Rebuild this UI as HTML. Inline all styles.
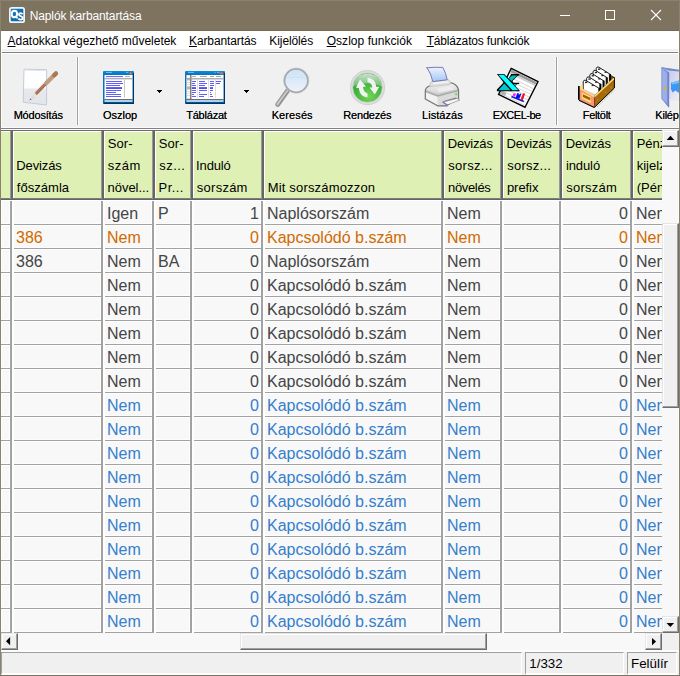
<!DOCTYPE html><html><head><meta charset="utf-8"><title>Naplók karbantartása</title><style>
*{box-sizing:border-box;margin:0;padding:0}
html,body{width:680px;height:676px;overflow:hidden;background:#f0f0f0;font-family:"Liberation Sans",sans-serif;}
#w{position:absolute;left:0;top:0;width:680px;height:676px;overflow:hidden;background:#f0f0f0}
.a{position:absolute}
#title{left:0;top:0;width:680px;height:31px;background:#7e735f}
#ttext{top:9px;color:#fff;font-size:12px;line-height:15px;white-space:nowrap}
#menu{left:1px;top:31px;width:678px;height:18px;background:#fff}
.mi{top:34px;font-size:12px;line-height:15px;color:#000;white-space:nowrap}
.mi u{text-decoration:underline;text-decoration-thickness:1px;text-underline-offset:1px}
.tl{top:109px;font-size:11px;line-height:13px;color:#000;white-space:nowrap;text-align:center;text-shadow:0 0 0.6px rgba(0,0,0,.75)}
.hc{background:#dff0b5;top:131px;height:67px}
.ht{font-size:13px;line-height:22px;color:#000;white-space:nowrap}
.bt{font-size:16px;line-height:24px;white-space:nowrap;height:24px}
.c0{color:#454545}.c1{color:#d06a00}.c2{color:#357ecb}
</style></head><body><div id="w">
<div id="title" class="a"></div>
<svg class="a" style="left:8px;top:6px" width="18" height="18" viewBox="8 6 18 18"><defs><linearGradient id="gqs" x1="0" y1="0" x2="1" y2="1"><stop offset="0" stop-color="#1a84cc"/><stop offset="1" stop-color="#065c9e"/></linearGradient></defs><rect x="9" y="7" width="16" height="16" rx="2.6" fill="#f1f3f6"/><rect x="10.7" y="8.7" width="12.6" height="12.6" rx="1" fill="url(#gqs)"/><ellipse cx="14.4" cy="14" rx="2.7" ry="3.3" fill="none" stroke="#fff" stroke-width="1.9"/><path d="M15.2 16.2L17.6 18.4" stroke="#fff" stroke-width="1.7"/><path d="M22.6 14.2C21.6 12.6 18.8 12.8 18.9 14.6C19 16.4 22.7 15.9 22.8 18C22.9 20 19.4 20.1 18.4 18.5" fill="none" stroke="#fff" stroke-width="1.8"/></svg>
<div id="ttext" class="a" style="left:29.66px;letter-spacing:-0.109px">Naplók karbantartása</div>
<svg class="a" style="left:555px;top:5px" width="115" height="22" viewBox="0 0 115 22" shape-rendering="crispEdges"><rect x="5" y="10" width="10" height="1" fill="#fff"/><rect x="50.5" y="5.5" width="9" height="9" fill="none" stroke="#fff" stroke-width="1"/><g shape-rendering="geometricPrecision" stroke="#fff" stroke-width="1.1"><line x1="96" y1="5" x2="106" y2="15"/><line x1="106" y1="5" x2="96" y2="15"/></g></svg>
<div id="menu" class="a"></div>
<div class="a mi" style="left:7.56px;letter-spacing:-0.023px"><u>A</u>datokkal végezhető műveletek</div>
<div class="a mi" style="left:188.98px;letter-spacing:-0.113px"><u>K</u>arbantartás</div>
<div class="a mi" style="left:269.36px;letter-spacing:-0.109px">Ki<u>j</u>elölés</div>
<div class="a mi" style="left:326.66px;letter-spacing:0.047px"><u>O</u>szlop funkciók</div>
<div class="a mi" style="left:426.63px;letter-spacing:-0.172px"><u>T</u>áblázatos funkciók</div>
<div class="a" style="left:1px;top:51px;width:678px;height:1px;background:#f8f8f8"></div>
<div class="a" style="left:1px;top:52px;width:678px;height:1px;background:#828282"></div>
<div class="a" style="left:1px;top:53px;width:678px;height:1px;background:#fff"></div>
<div class="a" style="left:1px;top:49px;width:1px;height:79px;background:#fcfcfc"></div>
<div class="a" style="left:678px;top:49px;width:1px;height:79px;background:#f8f8f9"></div>
<div class="a" style="left:76px;top:57px;width:1px;height:68px;background:#f7f7f7"></div>
<div class="a" style="left:77px;top:57px;width:1px;height:68px;background:#a0a0a0"></div>
<div class="a" style="left:78px;top:57px;width:1px;height:68px;background:#fff"></div>
<div class="a" style="left:555px;top:57px;width:1px;height:68px;background:#f7f7f7"></div>
<div class="a" style="left:556px;top:57px;width:1px;height:68px;background:#a0a0a0"></div>
<div class="a" style="left:557px;top:57px;width:1px;height:68px;background:#fff"></div>
<div class="a tl" style="left:-1.84px;width:80px;letter-spacing:-0.185px">Módosítás</div>
<div class="a tl" style="left:80.06px;width:80px;letter-spacing:0.004px">Oszlop</div>
<div class="a tl" style="left:166.43px;width:80px;letter-spacing:-0.200px">Táblázat</div>
<div class="a tl" style="left:252.20px;width:80px;letter-spacing:0.099px">Keresés</div>
<div class="a tl" style="left:327.35px;width:80px;letter-spacing:-0.194px">Rendezés</div>
<div class="a tl" style="left:402.45px;width:80px;letter-spacing:0.052px">Listázás</div>
<div class="a tl" style="left:476.68px;width:80px;letter-spacing:-0.490px">EXCEL-be</div>
<div class="a tl" style="left:556.64px;width:80px;letter-spacing:-0.315px">Feltölt</div>
<div class="a tl" style="left:632.60px;width:80px;letter-spacing:-0.200px">Kilépés</div>
<div class="a" style="left:157px;top:90px;width:5px;height:1px;background:#000"></div><div class="a" style="left:158px;top:91px;width:3px;height:1px;background:#000"></div><div class="a" style="left:159px;top:92px;width:1px;height:1px;background:#000"></div>
<div class="a" style="left:244px;top:90px;width:5px;height:1px;background:#000"></div><div class="a" style="left:245px;top:91px;width:3px;height:1px;background:#000"></div><div class="a" style="left:246px;top:92px;width:1px;height:1px;background:#000"></div>
<svg class="a" style="left:0;top:54px" width="679" height="73" viewBox="0 54 679 73">
<defs>
<linearGradient id="gpaper" x1="0" y1="0" x2="0" y2="1"><stop offset="0" stop-color="#ffffff"/><stop offset="0.52" stop-color="#fdfdfe"/><stop offset="0.56" stop-color="#e6e8ec"/><stop offset="1" stop-color="#e2e5ea"/></linearGradient>
<linearGradient id="gpen" x1="0" y1="0" x2="1" y2="1"><stop offset="0" stop-color="#c89878"/><stop offset="0.5" stop-color="#b07a58"/><stop offset="1" stop-color="#8c5a3c"/></linearGradient>
<linearGradient id="gwin" x1="0" y1="0" x2="0" y2="1"><stop offset="0" stop-color="#0f8ad8"/><stop offset="0.12" stop-color="#0672c0"/><stop offset="0.9" stop-color="#0a70b8"/><stop offset="1" stop-color="#00406e"/></linearGradient>
<linearGradient id="glens" x1="0" y1="0" x2="0" y2="1"><stop offset="0" stop-color="#cfe2f6"/><stop offset="0.4" stop-color="#d8e8f8"/><stop offset="1" stop-color="#f0f2fa"/></linearGradient>
<radialGradient id="ggreen" cx="0.55" cy="0.8" r="0.85"><stop offset="0" stop-color="#74d454"/><stop offset="0.55" stop-color="#3eb43e"/><stop offset="1" stop-color="#349c3c"/></radialGradient>
<linearGradient id="ggloss" x1="0" y1="0" x2="0" y2="1"><stop offset="0" stop-color="#f4f4f4" stop-opacity="0.78"/><stop offset="1" stop-color="#e8e8e8" stop-opacity="0.3"/></linearGradient>
<linearGradient id="gppaper" x1="0" y1="0" x2="0" y2="1"><stop offset="0" stop-color="#eef3ff"/><stop offset="1" stop-color="#a4c4f6"/></linearGradient>
<linearGradient id="gprn" x1="0" y1="0" x2="0" y2="1"><stop offset="0" stop-color="#f2f2f2"/><stop offset="0.5" stop-color="#d4d4d4"/><stop offset="1" stop-color="#bcbcbc"/></linearGradient>
<linearGradient id="gprn2" x1="0" y1="0" x2="0" y2="1"><stop offset="0" stop-color="#f4f4f4"/><stop offset="1" stop-color="#dcdcdc"/></linearGradient>
<linearGradient id="gdoor" x1="0" y1="0" x2="1" y2="0"><stop offset="0" stop-color="#9fb0ea"/><stop offset="0.7" stop-color="#7f98dc"/><stop offset="1" stop-color="#6078c0"/></linearGradient>
<linearGradient id="gdoorin" x1="0" y1="0" x2="1" y2="1"><stop offset="0" stop-color="#b8bce8"/><stop offset="1" stop-color="#f0f0f8"/></linearGradient>
</defs>

<!-- 1 Modositas: paper + pen -->
<g>
<path d="M24 69.2 L46.6 69.7 L46.6 105 L23.2 102.2 Z" fill="url(#gpaper)" stroke="#c4ccd6" stroke-width="1"/>
<path d="M25 70.2 L45.6 70.6" stroke="#dfe4ea" stroke-width="1"/>
<path d="M29.3 100.5 L32.2 96 L34.2 97.8 Z" fill="#d8d8d8"/>
<path d="M29.3 100.5 L30.6 98.4 L31.6 99.3 Z" fill="#505458"/>
<path d="M32 96.2 L35 92.8 L37.2 94.8 L34.2 98 Z" fill="#eadfd4"/>
<path d="M35.8 93.8 L47 82.4" stroke="#b07a58" stroke-width="3.3" stroke-linecap="butt"/>
<path d="M36.4 94.6 L47.6 83.2" stroke="#8e5e42" stroke-width="0.9" opacity="0.7"/>
<path d="M46.4 83 L55.6 73.8" stroke="#c09c84" stroke-width="4.3" stroke-linecap="round"/>
<path d="M54.2 75.2 L56 73.4" stroke="#a87858" stroke-width="4.3" stroke-linecap="round"/>
</g>

<!-- 2 Oszlop window -->
<g>
<rect x="103" y="71" width="31" height="33" rx="1" fill="url(#gwin)"/>
<rect x="133" y="73" width="1" height="31" fill="#00365e"/>
<rect x="104" y="103" width="30" height="1" fill="#00365e"/>
<rect x="104.5" y="75" width="28" height="24.6" fill="#ffffff"/>
<rect x="106" y="71.9" width="6" height="0.9" fill="#7cc4f4"/>
<rect x="126" y="71.9" width="2.4" height="0.9" fill="#7cc4f4"/>
<path d="M129 74.3 L130.7 71.6 L132.4 74.3 Z" fill="#f8743c"/>
<rect x="106" y="76" width="17" height="1.1" fill="#6c6cf6"/>
<rect x="125" y="76" width="5" height="1.1" fill="#b4b4b4"/>
<rect x="104.5" y="78.2" width="28" height="1.1" fill="#9c9c9c"/>
<rect x="124.1" y="80" width="0.9" height="17.6" fill="#c4c4c4"/>
<g fill="#6060f8">
<rect x="106" y="81" width="16" height="1"/>
<rect x="106" y="83" width="17" height="1"/>
<rect x="106" y="85" width="14" height="1"/>
<rect x="106" y="87.1" width="16" height="1.9" fill="#5050f8"/>
<rect x="106" y="90" width="15" height="1"/>
<rect x="106" y="92" width="10" height="1"/>
<rect x="106" y="94" width="15" height="1"/>
<rect x="106" y="96" width="15" height="1"/>
</g>
<rect x="104.5" y="99" width="28" height="1" fill="#6c6c6c"/>
<rect x="104.5" y="100.2" width="28" height="1.6" fill="#d6ecff"/>
</g>

<!-- 3 Tablazat window -->
<g>
<rect x="185" y="71" width="40" height="33" rx="1" fill="url(#gwin)"/>
<rect x="224" y="73" width="1" height="31" fill="#00365e"/>
<rect x="186" y="103" width="39" height="1" fill="#00365e"/>
<rect x="186.5" y="75" width="37" height="24.6" fill="#ffffff"/>
<rect x="188" y="71.9" width="6" height="0.9" fill="#7cc4f4"/>
<rect x="214.6" y="71.9" width="1" height="0.9" fill="#7cc4f4"/>
<rect x="217" y="71.9" width="2.6" height="0.9" fill="#7cc4f4"/>
<path d="M219.6 74.3 L221.5 71.6 L223.4 74.3 Z" fill="#f8743c"/>
<!-- row header -->
<rect x="186.5" y="75" width="4" height="24" fill="#c4c4c4"/>
<g fill="#ffffff"><rect x="187" y="75.4" width="3" height="2.4"/><rect x="187" y="80.6" width="3" height="1.4"/><rect x="187" y="82.8" width="3" height="1.4"/><rect x="187" y="84.8" width="3" height="1.4"/><rect x="187" y="89.6" width="3" height="1.4"/><rect x="187" y="91.6" width="3" height="1.4"/><rect x="187" y="93.6" width="3" height="1.4"/><rect x="187" y="95.6" width="3" height="2.8"/></g>
<rect x="186.5" y="87" width="4" height="2" fill="#b8b8b8"/>
<rect x="190.3" y="75" width="1.1" height="24" fill="#5c5c5c"/>
<g fill="#a8a8a8"><rect x="192" y="76" width="4" height="1"/><rect x="200" y="76" width="7" height="1"/><rect x="210" y="76" width="4" height="1"/><rect x="216" y="76" width="5" height="1"/></g>
<rect x="186.5" y="78.2" width="37" height="1.2" fill="#9c9c9c"/>
<g fill="#d6d6d6"><rect x="197.2" y="80" width="0.8" height="18"/><rect x="208.3" y="80" width="0.8" height="18"/><rect x="215" y="80" width="0.8" height="18"/></g>
<g fill="#6060f8">
<rect x="192" y="81" width="4" height="1"/><rect x="199" y="81" width="6" height="1"/><rect x="210" y="81" width="4" height="1"/><rect x="216" y="81" width="5" height="1"/>
<rect x="192" y="83" width="3" height="1"/><rect x="199" y="83" width="8" height="1"/><rect x="210" y="83" width="4" height="1"/><rect x="216" y="83" width="4" height="1"/>
<rect x="192" y="85" width="4" height="1"/><rect x="199" y="85" width="6" height="1"/><rect x="210" y="85" width="4" height="1"/>
<rect x="192" y="87.1" width="4" height="1.9" fill="#5050f8"/><rect x="199" y="87.1" width="8" height="1.9" fill="#5050f8"/><rect x="210" y="87.1" width="3" height="1.9" fill="#5050f8"/>
<rect x="192" y="90" width="4" height="1"/><rect x="199" y="90" width="8" height="1"/><rect x="210" y="90" width="3" height="1"/>
<rect x="192" y="92" width="4" height="1"/><rect x="199" y="92" width="1" height="1"/><rect x="210" y="92" width="1" height="1"/>
<rect x="192" y="94" width="2" height="1"/><rect x="199" y="94" width="8" height="1"/><rect x="210" y="94" width="2" height="1"/>
<rect x="192" y="96" width="4" height="1"/><rect x="199" y="96" width="5" height="1"/><rect x="210" y="96" width="3" height="1"/>
</g>
<rect x="186.5" y="99" width="37" height="1" fill="#6c6c6c"/>
<rect x="186.5" y="100.2" width="37" height="1.6" fill="#d6ecff"/>
<rect x="188" y="100.6" width="3" height="0.8" fill="#a8c4dc"/><rect x="219" y="100.6" width="3" height="0.8" fill="#a8c4dc"/>
</g>

<!-- 4 Kereses magnifier -->
<g>
<path d="M287.6 90.6 L277.8 104.4" stroke="#9a9a9c" stroke-width="5" stroke-linecap="round"/>
<path d="M287.4 91 L277.6 104.2" stroke="#cacacc" stroke-width="2" stroke-linecap="round"/>
<path d="M288.6 91.2 L279.4 104.4" stroke="#848486" stroke-width="0.9" stroke-linecap="round" opacity="0.8"/>
<circle cx="296.2" cy="80.6" r="11.7" fill="url(#glens)" stroke="#a4a8ac" stroke-width="1.8"/>
<circle cx="296.2" cy="80.6" r="12.8" fill="none" stroke="#c4c8cc" stroke-width="0.7" opacity="0.7"/>
<path d="M287.4 77.8 Q296 76.6 305 78" stroke="#c4dcf4" stroke-width="0.8" fill="none" opacity="0.8"/>
</g>

<!-- 5 Rendezes -->
<g>
<circle cx="367.5" cy="87.6" r="17" fill="#dedede" stroke="#d2d2d2" stroke-width="1.2"/>
<circle cx="367.5" cy="87.6" r="14.7" fill="url(#ggreen)" stroke="#c4d4c4" stroke-width="0.6"/>
<path d="M352.9 86.6 A14.7 14.7 0 0 1 382.1 86.6 Q367.5 80 352.9 86.6Z" fill="url(#ggloss)"/>
<path d="M356 87.8 L360 79.6 L366 86.6 L363 87 Q363.4 92.4 367.6 93.4 L367.4 97.6 Q359.6 96.6 358.8 88 Z" fill="#f2f2f2"/>
<path d="M367.4 77.6 Q375.4 78.6 376.4 87 L379.4 86.8 L374.8 94.4 L369.6 87.6 L372.4 87.4 Q371.8 83 367.6 82 Z" fill="#f2f2f2"/>
</g>

<!-- 6 Listazas printer -->
<g stroke-linejoin="round" stroke-linecap="round">
<!-- body -->
<path d="M425.3 92 Q425 87.6 429.4 86 L436 84.2 L449.4 82.4 Q456.8 83.6 458.5 89.6 L458.6 99 L447.2 105.8 L437.5 105.8 L425.3 99Z" fill="url(#gprn)"/>
<path d="M425.9 92.6 L437.8 97 L437.8 105.2 L425.9 98.8Z" fill="#f2f2f2"/>
<path d="M437.8 97 L458 91.8 L458 98.8 L447 105.2 L437.8 105.2Z" fill="#dadada"/>
<path d="M425.8 91.4 L437.8 95.8 L458.2 90.6" stroke="#a8a8a8" stroke-width="1.5" fill="none"/>
<path d="M425.8 90.2 L437.8 94.6 L458.2 89.4" stroke="#c4c4c4" stroke-width="0.9" fill="none"/>
<path d="M436.6 88.4 L451.4 86.2 Q453 87.8 453.2 89.6 L439 92.2 Z" fill="#eeeeee" opacity="0.9"/>
<!-- outlines -->
<path d="M429.4 86 Q425 87.6 425.3 92 L425.3 99 L437.5 105.8 L447.2 105.8" fill="none" stroke="#767676" stroke-width="1.2"/>
<path d="M450.4 82.6 Q456.8 83.8 458.5 89.6 L458.6 98.6" fill="none" stroke="#767676" stroke-width="1.2"/>
<path d="M429.4 86 L436 84.2 L449.4 82.4" fill="none" stroke="#b4b4b4" stroke-width="0.8"/>
<!-- feed -->
<path d="M430 84 L431.6 81 L448.4 79.4 L450.4 82.2 L450 84.6 L430.6 86.6Z" fill="#dedede" stroke="#b8b8b8" stroke-width="0.6"/>
<path d="M432.4 82.4 L448 80.8 L449 82.6 L433.6 84.4Z" fill="#f2f2f2"/>
<!-- paper -->
<path d="M427 67.8 Q435 67 442.8 67.4 Q446 73 447.2 79.8 L432.8 81.6 Q431.2 73.4 427 67.8Z" fill="url(#gppaper)" stroke="#6c6cae" stroke-width="0.9"/>
<!-- slot + tray -->
<path d="M443.4 101 L456 97.6 L457.4 98.6 L445.2 102.4Z" fill="#7c7c7c"/>
<path d="M443.2 102 L457 98.4 L459.8 100 L447.2 105Z" fill="#f6f6f6" stroke="#8c8c8c" stroke-width="0.7"/>
<path d="M442.8 102 L447.2 105 L449 104.4" stroke="#7474c8" stroke-width="1.1" fill="none"/>
<circle cx="456.2" cy="94.2" r="1.1" fill="#58cc38"/>
<circle cx="456.2" cy="94.2" r="1.8" fill="#a0e890" opacity="0.4"/>
</g>

<!-- 7 EXCEL-be -->
<g stroke-linejoin="miter">
<path d="M511.2 68.4 L538 81.6 L525 107.2 L498.6 94.4Z" fill="#ffffff" stroke="#000" stroke-width="1.4"/>
<path d="M511.6 69.8 L536.6 82 L535.4 84.4 L510.4 72.2Z" fill="#9c9c9c"/>
<path d="M510.4 72.2 L535.4 84.4 L534.6 86 L509.6 73.8Z" fill="#d0d0d0"/>
<path d="M500 93.8 L501.6 90.6 L506.4 93 L504.8 96.2Z" fill="#b0b0b0"/>
<g stroke="#c8c8c8" stroke-width="0.8">
<path d="M508.8 76.6 L533.2 88.6"/><path d="M507.4 79.4 L531.8 91.4"/><path d="M506 82.2 L530.4 94.2"/><path d="M504.6 85 L529 97"/><path d="M503.2 87.8 L527.6 99.8"/><path d="M501.8 90.6 L526.2 102.6"/><path d="M503 94.6 L524.8 105.4"/>
</g>
<!-- X -->
<path d="M496.9 73.9 L504.2 73.9 L508.6 78.6 L511.2 74 L519.2 74 L519.2 75.4 L518 75.4 L512.4 81 L513.4 82.8 L519.2 82.8 L519.2 84 L517 84 L515.6 86.6 L519.6 90.4 L519.6 91.2 L496.9 91.2 L496.9 89.6 L503.6 82.6 Z" fill="#000"/>
<path d="M498.2 74.8 L503.8 74.8 L518.4 90.2 L512.4 90.2Z" fill="#08ffff"/>
<path d="M512 75.4 L517.2 75.4 L511.4 81 L508.8 78.4Z" fill="#00c4c4"/>
<path d="M513.8 84 L516.6 84 L515.2 86.2 Z" fill="#00c4c4"/>
<path d="M498.4 90.2 L504.2 83.6 L510.6 90.2Z" fill="#00c8c8"/>
<!-- chart -->
<path d="M511.4 96.4 L523.8 101.6" stroke="#1818d8" stroke-width="1.6"/>
<path d="M512.6 95.6 L513.8 93 L516 94 L514.8 96.6Z" fill="#ff18ff"/>
<path d="M515.6 97.4 L517.4 93 L519 93.6 L518.6 95 L520.6 93.4 L521.4 94 L519.2 99 Z" fill="#0808f8"/>
<path d="M520.6 99.4 L523 93.2 L525.2 93.6 L522.8 100.2Z" fill="#f81010"/>
</g>

<!-- 8 Feltolt card box -->
<g stroke-linejoin="round">
<path d="M609.4 74.6 L614.2 77.4 L612.2 81.4 L609.6 80.4Z" fill="#7c4c00" stroke="#000" stroke-width="0.6"/>
<path d="M609.2 73.4 L611.0 74.2 L611.0 85.8 L609.2 85.8Z" fill="#000"/>
<path d="M596.2 68.6 L597.2 67.0 L598.8 67.2 L609.4 73.8 L609.4 85.8 L596.2 79.4Z" fill="#fff" stroke="#000" stroke-width="0.9"/>
<rect x="598.0" y="68.5" width="2.3" height="1.4" fill="#282828"/>
<rect x="604.6" y="71.6" width="2.1" height="1.3" fill="#282828"/>
<path d="M606.0 76.7 L607.8 77.5 L607.8 89.1 L606.0 89.1Z" fill="#000"/>
<path d="M593.0 71.9 L594.0 70.3 L595.6 70.5 L606.2 77.1 L606.2 89.1 L593.0 82.7Z" fill="#fff" stroke="#000" stroke-width="0.9"/>
<rect x="594.8" y="71.8" width="2.3" height="1.4" fill="#282828"/>
<rect x="601.4" y="74.9" width="2.1" height="1.3" fill="#282828"/>
<path d="M602.8 80.0 L604.6 80.8 L604.6 92.4 L602.8 92.4Z" fill="#000"/>
<path d="M589.8 75.2 L590.8 73.6 L592.4 73.8 L603.0 80.4 L603.0 92.4 L589.8 86.0Z" fill="#fff" stroke="#000" stroke-width="0.9"/>
<rect x="591.6" y="75.1" width="2.3" height="1.4" fill="#282828"/>
<rect x="598.2" y="78.2" width="2.1" height="1.3" fill="#282828"/>
<path d="M599.6 83.3 L601.4 84.1 L601.4 95.7 L599.6 95.7Z" fill="#000"/>
<path d="M586.6 78.5 L587.6 76.9 L589.2 77.1 L599.8 83.7 L599.8 95.7 L586.6 89.3Z" fill="#fff" stroke="#000" stroke-width="0.9"/>
<rect x="588.4" y="78.4" width="2.3" height="1.4" fill="#282828"/>
<rect x="595.0" y="81.5" width="2.1" height="1.3" fill="#282828"/>
<path d="M598.6 87.7 L600.4 88.5 L600.4 100.1 L598.6 100.1Z" fill="#000"/>
<path d="M583.2 81.8 L584.2 80.2 L585.8 80.4 L598.8 88.1 L598.8 100.1 L583.2 92.6Z" fill="#fff" stroke="#000" stroke-width="0.9"/>
<rect x="585.0" y="81.7" width="2.3" height="1.4" fill="#282828"/>
<rect x="591.6" y="84.8" width="2.1" height="1.3" fill="#282828"/>
<path d="M583.6 89 L598.4 96 L598.4 99 L583.6 92Z" fill="#c4c4c4"/>
<path d="M594.4 96 L614.4 77.6 L614.4 88 L594.4 107.4Z" fill="#a86a04" stroke="#000" stroke-width="1"/>
<path d="M594.4 95.4 L613.2 78 L614.2 78.2 L614 79.4 L594.6 97.4Z" fill="#ffd878"/>
<path d="M579.6 88 L594.4 96.6 L594.4 107.4 L579.6 100.2Z" fill="#ff9472"/>
<path d="M579.6 86.4 L582.6 84.4 L582.8 89 L594.4 95.6 L594.4 97.4 L579.6 89Z" fill="#ffd878"/>
<path d="M579 100.2 L594.4 107.6" stroke="#000" stroke-width="1.1"/>
<path d="M581.8 92.4 L591 96.8 L591 103 L581.8 98.6Z" fill="#ffe088"/>
<path d="M582.8 94.2 L590.4 97.8 L590.4 100.6 L582.8 97Z" fill="#a06000"/>
<rect x="578" y="86" width="1.7" height="13.8" fill="#000"/>
<g fill="#8c8c8c" opacity="0.85"><rect x="610.4" y="86.8" width="1.6" height="1.6"/><rect x="604.6" y="91.4" width="1.6" height="1.6"/><rect x="597" y="98.6" width="1.6" height="1.6"/></g>
<path d="M597 107 L614.6 90" stroke="#9c9c9c" stroke-width="1" stroke-dasharray="1.2 1.2" opacity="0.7"/>
</g>

<!-- 9 Kilepes door (clipped) -->
<g>
<path d="M661.8 67.2 L679 69.8 L679 100.4 L669 100.4 L669 73Z" fill="url(#gdoorin)"/>
<path d="M661.8 67.2 L679 69.8 L679 71.4 L668.6 70.6Z" fill="#7088cc"/>
<path d="M661.8 67.2 L668.8 72.8 L668.8 107.2 L661.8 98.6Z" fill="url(#gdoor)" stroke="#5870b8" stroke-width="0.6"/>
<path d="M662.6 69.4 L667.2 73.2 L667.2 103.6 L662.6 97.8Z" fill="#a4b4ec" opacity="0.7"/>
<circle cx="665" cy="88.5" r="1.5" fill="#e2b41c"/>
<path d="M671 82.8 L679 80.4 L679 93 L675.4 90.6 L672.6 92.6 L671 89.2Z" fill="#3c98f4"/>
<path d="M671 82.8 L679 80.4 L679 83 L672.4 84.6Z" fill="#78c0fc"/>
<path d="M669 100.4 L679 100.4 L679 98 L669 99Z" fill="#e8e8f0"/>
</g>
</svg>

<div class="a" style="left:1px;top:127px;width:678px;height:1px;background:#fafafa"></div>
<div class="a" style="left:1px;top:128px;width:678px;height:1px;background:#828282"></div>
<div class="a" style="left:1px;top:129px;width:678px;height:1px;background:#fff"></div>
<div class="a" style="left:1px;top:130px;width:661px;height:503px;background:#f8f8f8;overflow:hidden" id="grid">
<div class="a" style="left:0px;top:0px;width:661px;height:1px;background:#6a6a6a"></div>
<div class="a" style="left:0px;top:1px;width:661px;height:1px;background:#fff"></div>
<div class="a" style="left:0px;top:2px;width:661px;height:66px;background:#dff0b5"></div>
<div class="a" style="left:0px;top:68px;width:661px;height:1px;background:#7c7c7c"></div>
<div class="a" style="left:0px;top:69px;width:661px;height:1px;background:#646464"></div>
<div class="a" style="left:0px;top:70px;width:661px;height:1px;background:#fff"></div>
<div class="a" style="left:9px;top:1px;width:1px;height:68px;background:#9a9a9a"></div>
<div class="a" style="left:10px;top:0px;width:2px;height:70px;background:#666"></div>
<div class="a" style="left:12px;top:1px;width:1px;height:67px;background:#fff"></div>
<div class="a" style="left:100px;top:1px;width:1px;height:68px;background:#9a9a9a"></div>
<div class="a" style="left:101px;top:0px;width:2px;height:70px;background:#666"></div>
<div class="a" style="left:103px;top:1px;width:1px;height:67px;background:#fff"></div>
<div class="a" style="left:151px;top:1px;width:1px;height:68px;background:#9a9a9a"></div>
<div class="a" style="left:152px;top:0px;width:2px;height:70px;background:#666"></div>
<div class="a" style="left:154px;top:1px;width:1px;height:67px;background:#fff"></div>
<div class="a" style="left:189px;top:1px;width:1px;height:68px;background:#9a9a9a"></div>
<div class="a" style="left:190px;top:0px;width:2px;height:70px;background:#666"></div>
<div class="a" style="left:192px;top:1px;width:1px;height:67px;background:#fff"></div>
<div class="a" style="left:260px;top:1px;width:1px;height:68px;background:#9a9a9a"></div>
<div class="a" style="left:261px;top:0px;width:2px;height:70px;background:#666"></div>
<div class="a" style="left:263px;top:1px;width:1px;height:67px;background:#fff"></div>
<div class="a" style="left:440px;top:1px;width:1px;height:68px;background:#9a9a9a"></div>
<div class="a" style="left:441px;top:0px;width:2px;height:70px;background:#666"></div>
<div class="a" style="left:443px;top:1px;width:1px;height:67px;background:#fff"></div>
<div class="a" style="left:499px;top:1px;width:1px;height:68px;background:#9a9a9a"></div>
<div class="a" style="left:500px;top:0px;width:2px;height:70px;background:#666"></div>
<div class="a" style="left:502px;top:1px;width:1px;height:67px;background:#fff"></div>
<div class="a" style="left:558px;top:1px;width:1px;height:68px;background:#9a9a9a"></div>
<div class="a" style="left:559px;top:0px;width:2px;height:70px;background:#666"></div>
<div class="a" style="left:561px;top:1px;width:1px;height:67px;background:#fff"></div>
<div class="a" style="left:629px;top:1px;width:1px;height:68px;background:#9a9a9a"></div>
<div class="a" style="left:630px;top:0px;width:2px;height:70px;background:#666"></div>
<div class="a" style="left:632px;top:1px;width:1px;height:67px;background:#fff"></div>
<div class="a" style="left:0px;top:70px;width:1px;height:433px;background:#fff"></div>
<div class="a" style="left:8px;top:71px;width:1px;height:432px;background:#fff"></div>
<div class="a" style="left:99px;top:71px;width:1px;height:432px;background:#fff"></div>
<div class="a" style="left:150px;top:71px;width:1px;height:432px;background:#fff"></div>
<div class="a" style="left:188px;top:71px;width:1px;height:432px;background:#fff"></div>
<div class="a" style="left:259px;top:71px;width:1px;height:432px;background:#fff"></div>
<div class="a" style="left:439px;top:71px;width:1px;height:432px;background:#fff"></div>
<div class="a" style="left:498px;top:71px;width:1px;height:432px;background:#fff"></div>
<div class="a" style="left:557px;top:71px;width:1px;height:432px;background:#fff"></div>
<div class="a" style="left:628px;top:71px;width:1px;height:432px;background:#fff"></div>
<div class="a" style="left:0px;top:93px;width:661px;height:1px;background:#fdfdfd"></div>
<div class="a" style="left:0px;top:94px;width:661px;height:1px;background:#a2a2a2"></div>
<div class="a" style="left:0px;top:95px;width:661px;height:1px;background:#fff"></div>
<div class="a" style="left:0px;top:117px;width:661px;height:1px;background:#fdfdfd"></div>
<div class="a" style="left:0px;top:118px;width:661px;height:1px;background:#a2a2a2"></div>
<div class="a" style="left:0px;top:119px;width:661px;height:1px;background:#fff"></div>
<div class="a" style="left:0px;top:141px;width:661px;height:1px;background:#fdfdfd"></div>
<div class="a" style="left:0px;top:142px;width:661px;height:1px;background:#a2a2a2"></div>
<div class="a" style="left:0px;top:143px;width:661px;height:1px;background:#fff"></div>
<div class="a" style="left:0px;top:165px;width:661px;height:1px;background:#fdfdfd"></div>
<div class="a" style="left:0px;top:166px;width:661px;height:1px;background:#a2a2a2"></div>
<div class="a" style="left:0px;top:167px;width:661px;height:1px;background:#fff"></div>
<div class="a" style="left:0px;top:189px;width:661px;height:1px;background:#fdfdfd"></div>
<div class="a" style="left:0px;top:190px;width:661px;height:1px;background:#a2a2a2"></div>
<div class="a" style="left:0px;top:191px;width:661px;height:1px;background:#fff"></div>
<div class="a" style="left:0px;top:213px;width:661px;height:1px;background:#fdfdfd"></div>
<div class="a" style="left:0px;top:214px;width:661px;height:1px;background:#a2a2a2"></div>
<div class="a" style="left:0px;top:215px;width:661px;height:1px;background:#fff"></div>
<div class="a" style="left:0px;top:237px;width:661px;height:1px;background:#fdfdfd"></div>
<div class="a" style="left:0px;top:238px;width:661px;height:1px;background:#a2a2a2"></div>
<div class="a" style="left:0px;top:239px;width:661px;height:1px;background:#fff"></div>
<div class="a" style="left:0px;top:261px;width:661px;height:1px;background:#fdfdfd"></div>
<div class="a" style="left:0px;top:262px;width:661px;height:1px;background:#a2a2a2"></div>
<div class="a" style="left:0px;top:263px;width:661px;height:1px;background:#fff"></div>
<div class="a" style="left:0px;top:285px;width:661px;height:1px;background:#fdfdfd"></div>
<div class="a" style="left:0px;top:286px;width:661px;height:1px;background:#a2a2a2"></div>
<div class="a" style="left:0px;top:287px;width:661px;height:1px;background:#fff"></div>
<div class="a" style="left:0px;top:309px;width:661px;height:1px;background:#fdfdfd"></div>
<div class="a" style="left:0px;top:310px;width:661px;height:1px;background:#a2a2a2"></div>
<div class="a" style="left:0px;top:311px;width:661px;height:1px;background:#fff"></div>
<div class="a" style="left:0px;top:333px;width:661px;height:1px;background:#fdfdfd"></div>
<div class="a" style="left:0px;top:334px;width:661px;height:1px;background:#a2a2a2"></div>
<div class="a" style="left:0px;top:335px;width:661px;height:1px;background:#fff"></div>
<div class="a" style="left:0px;top:357px;width:661px;height:1px;background:#fdfdfd"></div>
<div class="a" style="left:0px;top:358px;width:661px;height:1px;background:#a2a2a2"></div>
<div class="a" style="left:0px;top:359px;width:661px;height:1px;background:#fff"></div>
<div class="a" style="left:0px;top:381px;width:661px;height:1px;background:#fdfdfd"></div>
<div class="a" style="left:0px;top:382px;width:661px;height:1px;background:#a2a2a2"></div>
<div class="a" style="left:0px;top:383px;width:661px;height:1px;background:#fff"></div>
<div class="a" style="left:0px;top:405px;width:661px;height:1px;background:#fdfdfd"></div>
<div class="a" style="left:0px;top:406px;width:661px;height:1px;background:#a2a2a2"></div>
<div class="a" style="left:0px;top:407px;width:661px;height:1px;background:#fff"></div>
<div class="a" style="left:0px;top:429px;width:661px;height:1px;background:#fdfdfd"></div>
<div class="a" style="left:0px;top:430px;width:661px;height:1px;background:#a2a2a2"></div>
<div class="a" style="left:0px;top:431px;width:661px;height:1px;background:#fff"></div>
<div class="a" style="left:0px;top:453px;width:661px;height:1px;background:#fdfdfd"></div>
<div class="a" style="left:0px;top:454px;width:661px;height:1px;background:#a2a2a2"></div>
<div class="a" style="left:0px;top:455px;width:661px;height:1px;background:#fff"></div>
<div class="a" style="left:0px;top:477px;width:661px;height:1px;background:#fdfdfd"></div>
<div class="a" style="left:0px;top:478px;width:661px;height:1px;background:#a2a2a2"></div>
<div class="a" style="left:0px;top:479px;width:661px;height:1px;background:#fff"></div>
<div class="a" style="left:0px;top:501px;width:661px;height:1px;background:#fdfdfd"></div>
<div class="a" style="left:0px;top:502px;width:661px;height:1px;background:#a2a2a2"></div>
<div class="a" style="left:0px;top:503px;width:661px;height:1px;background:#fff"></div>
<div class="a" style="left:9px;top:71px;width:2px;height:432px;background:#a2a2a2"></div>
<div class="a" style="left:11px;top:70px;width:2px;height:433px;background:#fff"></div>
<div class="a" style="left:100px;top:71px;width:2px;height:432px;background:#a2a2a2"></div>
<div class="a" style="left:102px;top:70px;width:2px;height:433px;background:#fff"></div>
<div class="a" style="left:151px;top:71px;width:2px;height:432px;background:#a2a2a2"></div>
<div class="a" style="left:153px;top:70px;width:2px;height:433px;background:#fff"></div>
<div class="a" style="left:189px;top:71px;width:2px;height:432px;background:#a2a2a2"></div>
<div class="a" style="left:191px;top:70px;width:2px;height:433px;background:#fff"></div>
<div class="a" style="left:260px;top:71px;width:2px;height:432px;background:#a2a2a2"></div>
<div class="a" style="left:262px;top:70px;width:2px;height:433px;background:#fff"></div>
<div class="a" style="left:440px;top:71px;width:2px;height:432px;background:#a2a2a2"></div>
<div class="a" style="left:442px;top:70px;width:2px;height:433px;background:#fff"></div>
<div class="a" style="left:499px;top:71px;width:2px;height:432px;background:#a2a2a2"></div>
<div class="a" style="left:501px;top:70px;width:2px;height:433px;background:#fff"></div>
<div class="a" style="left:558px;top:71px;width:2px;height:432px;background:#a2a2a2"></div>
<div class="a" style="left:560px;top:70px;width:2px;height:433px;background:#fff"></div>
<div class="a" style="left:629px;top:71px;width:2px;height:432px;background:#a2a2a2"></div>
<div class="a" style="left:631px;top:70px;width:2px;height:433px;background:#fff"></div>
<div class="a ht" style="left:15.26px;top:25px;letter-spacing:-0.112px">Devizás</div>
<div class="a ht" style="left:15.80px;top:47px;letter-spacing:0.030px">főszámla</div>
<div class="a ht" style="left:106.69px;top:3px;letter-spacing:0.125px">Sor-</div>
<div class="a ht" style="left:106.85px;top:25px;letter-spacing:0.491px">szám</div>
<div class="a ht" style="left:106.52px;top:47px;letter-spacing:-0.031px">növel...</div>
<div class="a ht" style="left:157.77px;top:3px;letter-spacing:0.056px">Sor-</div>
<div class="a ht" style="left:158.24px;top:25px;letter-spacing:0.446px">sz...</div>
<div class="a ht" style="left:157.57px;top:47px;letter-spacing:0.396px">Pr...</div>
<div class="a ht" style="left:195.12px;top:25px;letter-spacing:-0.156px">Induló</div>
<div class="a ht" style="left:195.83px;top:47px;letter-spacing:0.249px">sorszám</div>
<div class="a ht" style="left:266.77px;top:47px;letter-spacing:0.166px">Mit sorszámozzon</div>
<div class="a ht" style="left:446.77px;top:3px;letter-spacing:-0.185px">Devizás</div>
<div class="a ht" style="left:447.20px;top:25px;letter-spacing:0.325px">sorsz...</div>
<div class="a ht" style="left:447.04px;top:47px;letter-spacing:-0.343px">növelés</div>
<div class="a ht" style="left:505.57px;top:3px;letter-spacing:-0.164px">Devizás</div>
<div class="a ht" style="left:506.24px;top:25px;letter-spacing:0.255px">sorsz...</div>
<div class="a ht" style="left:505.96px;top:47px;letter-spacing:-0.068px">prefix</div>
<div class="a ht" style="left:564.77px;top:3px;letter-spacing:-0.185px">Devizás</div>
<div class="a ht" style="left:564.88px;top:25px;letter-spacing:-0.087px">induló</div>
<div class="a ht" style="left:565.20px;top:47px;letter-spacing:0.268px">sorszám</div>
<div class="a ht" style="left:635.70px;top:3px">Pénz</div>
<div class="a ht" style="left:635.70px;top:25px">kijelz</div>
<div class="a ht" style="left:635.70px;top:47px">(Pénz</div>
<div class="a bt c0" style="left:106px;top:72px">Igen</div>
<div class="a bt c0" style="left:157px;top:72px">P</div>
<div class="a bt c0" style="right:403px;top:72px;text-align:right">1</div>
<div class="a bt c0" style="left:266px;top:72px">Naplósorszám</div>
<div class="a bt c0" style="left:446px;top:72px">Nem</div>
<div class="a bt c0" style="right:34px;top:72px;text-align:right">0</div>
<div class="a bt c0" style="left:635px;top:72px">Nem</div>
<div class="a bt c1" style="left:15px;top:96px">386</div>
<div class="a bt c1" style="left:106px;top:96px">Nem</div>
<div class="a bt c1" style="right:403px;top:96px;text-align:right">0</div>
<div class="a bt c1" style="left:266px;top:96px">Kapcsolódó b.szám</div>
<div class="a bt c1" style="left:446px;top:96px">Nem</div>
<div class="a bt c1" style="right:34px;top:96px;text-align:right">0</div>
<div class="a bt c1" style="left:635px;top:96px">Nem</div>
<div class="a bt c0" style="left:15px;top:120px">386</div>
<div class="a bt c0" style="left:106px;top:120px">Nem</div>
<div class="a bt c0" style="left:157px;top:120px">BA</div>
<div class="a bt c0" style="right:403px;top:120px;text-align:right">0</div>
<div class="a bt c0" style="left:266px;top:120px">Naplósorszám</div>
<div class="a bt c0" style="left:446px;top:120px">Nem</div>
<div class="a bt c0" style="right:34px;top:120px;text-align:right">0</div>
<div class="a bt c0" style="left:635px;top:120px">Nem</div>
<div class="a bt c0" style="left:106px;top:144px">Nem</div>
<div class="a bt c0" style="right:403px;top:144px;text-align:right">0</div>
<div class="a bt c0" style="left:266px;top:144px">Kapcsolódó b.szám</div>
<div class="a bt c0" style="left:446px;top:144px">Nem</div>
<div class="a bt c0" style="right:34px;top:144px;text-align:right">0</div>
<div class="a bt c0" style="left:635px;top:144px">Nem</div>
<div class="a bt c0" style="left:106px;top:168px">Nem</div>
<div class="a bt c0" style="right:403px;top:168px;text-align:right">0</div>
<div class="a bt c0" style="left:266px;top:168px">Kapcsolódó b.szám</div>
<div class="a bt c0" style="left:446px;top:168px">Nem</div>
<div class="a bt c0" style="right:34px;top:168px;text-align:right">0</div>
<div class="a bt c0" style="left:635px;top:168px">Nem</div>
<div class="a bt c0" style="left:106px;top:192px">Nem</div>
<div class="a bt c0" style="right:403px;top:192px;text-align:right">0</div>
<div class="a bt c0" style="left:266px;top:192px">Kapcsolódó b.szám</div>
<div class="a bt c0" style="left:446px;top:192px">Nem</div>
<div class="a bt c0" style="right:34px;top:192px;text-align:right">0</div>
<div class="a bt c0" style="left:635px;top:192px">Nem</div>
<div class="a bt c0" style="left:106px;top:216px">Nem</div>
<div class="a bt c0" style="right:403px;top:216px;text-align:right">0</div>
<div class="a bt c0" style="left:266px;top:216px">Kapcsolódó b.szám</div>
<div class="a bt c0" style="left:446px;top:216px">Nem</div>
<div class="a bt c0" style="right:34px;top:216px;text-align:right">0</div>
<div class="a bt c0" style="left:635px;top:216px">Nem</div>
<div class="a bt c0" style="left:106px;top:240px">Nem</div>
<div class="a bt c0" style="right:403px;top:240px;text-align:right">0</div>
<div class="a bt c0" style="left:266px;top:240px">Kapcsolódó b.szám</div>
<div class="a bt c0" style="left:446px;top:240px">Nem</div>
<div class="a bt c0" style="right:34px;top:240px;text-align:right">0</div>
<div class="a bt c0" style="left:635px;top:240px">Nem</div>
<div class="a bt c2" style="left:106px;top:264px">Nem</div>
<div class="a bt c2" style="right:403px;top:264px;text-align:right">0</div>
<div class="a bt c2" style="left:266px;top:264px">Kapcsolódó b.szám</div>
<div class="a bt c2" style="left:446px;top:264px">Nem</div>
<div class="a bt c2" style="right:34px;top:264px;text-align:right">0</div>
<div class="a bt c2" style="left:635px;top:264px">Nem</div>
<div class="a bt c2" style="left:106px;top:288px">Nem</div>
<div class="a bt c2" style="right:403px;top:288px;text-align:right">0</div>
<div class="a bt c2" style="left:266px;top:288px">Kapcsolódó b.szám</div>
<div class="a bt c2" style="left:446px;top:288px">Nem</div>
<div class="a bt c2" style="right:34px;top:288px;text-align:right">0</div>
<div class="a bt c2" style="left:635px;top:288px">Nem</div>
<div class="a bt c2" style="left:106px;top:312px">Nem</div>
<div class="a bt c2" style="right:403px;top:312px;text-align:right">0</div>
<div class="a bt c2" style="left:266px;top:312px">Kapcsolódó b.szám</div>
<div class="a bt c2" style="left:446px;top:312px">Nem</div>
<div class="a bt c2" style="right:34px;top:312px;text-align:right">0</div>
<div class="a bt c2" style="left:635px;top:312px">Nem</div>
<div class="a bt c2" style="left:106px;top:336px">Nem</div>
<div class="a bt c2" style="right:403px;top:336px;text-align:right">0</div>
<div class="a bt c2" style="left:266px;top:336px">Kapcsolódó b.szám</div>
<div class="a bt c2" style="left:446px;top:336px">Nem</div>
<div class="a bt c2" style="right:34px;top:336px;text-align:right">0</div>
<div class="a bt c2" style="left:635px;top:336px">Nem</div>
<div class="a bt c2" style="left:106px;top:360px">Nem</div>
<div class="a bt c2" style="right:403px;top:360px;text-align:right">0</div>
<div class="a bt c2" style="left:266px;top:360px">Kapcsolódó b.szám</div>
<div class="a bt c2" style="left:446px;top:360px">Nem</div>
<div class="a bt c2" style="right:34px;top:360px;text-align:right">0</div>
<div class="a bt c2" style="left:635px;top:360px">Nem</div>
<div class="a bt c2" style="left:106px;top:384px">Nem</div>
<div class="a bt c2" style="right:403px;top:384px;text-align:right">0</div>
<div class="a bt c2" style="left:266px;top:384px">Kapcsolódó b.szám</div>
<div class="a bt c2" style="left:446px;top:384px">Nem</div>
<div class="a bt c2" style="right:34px;top:384px;text-align:right">0</div>
<div class="a bt c2" style="left:635px;top:384px">Nem</div>
<div class="a bt c2" style="left:106px;top:408px">Nem</div>
<div class="a bt c2" style="right:403px;top:408px;text-align:right">0</div>
<div class="a bt c2" style="left:266px;top:408px">Kapcsolódó b.szám</div>
<div class="a bt c2" style="left:446px;top:408px">Nem</div>
<div class="a bt c2" style="right:34px;top:408px;text-align:right">0</div>
<div class="a bt c2" style="left:635px;top:408px">Nem</div>
<div class="a bt c2" style="left:106px;top:432px">Nem</div>
<div class="a bt c2" style="right:403px;top:432px;text-align:right">0</div>
<div class="a bt c2" style="left:266px;top:432px">Kapcsolódó b.szám</div>
<div class="a bt c2" style="left:446px;top:432px">Nem</div>
<div class="a bt c2" style="right:34px;top:432px;text-align:right">0</div>
<div class="a bt c2" style="left:635px;top:432px">Nem</div>
<div class="a bt c2" style="left:106px;top:456px">Nem</div>
<div class="a bt c2" style="right:403px;top:456px;text-align:right">0</div>
<div class="a bt c2" style="left:266px;top:456px">Kapcsolódó b.szám</div>
<div class="a bt c2" style="left:446px;top:456px">Nem</div>
<div class="a bt c2" style="right:34px;top:456px;text-align:right">0</div>
<div class="a bt c2" style="left:635px;top:456px">Nem</div>
<div class="a bt c2" style="left:106px;top:480px">Nem</div>
<div class="a bt c2" style="right:403px;top:480px;text-align:right">0</div>
<div class="a bt c2" style="left:266px;top:480px">Kapcsolódó b.szám</div>
<div class="a bt c2" style="left:446px;top:480px">Nem</div>
<div class="a bt c2" style="right:34px;top:480px;text-align:right">0</div>
<div class="a bt c2" style="left:635px;top:480px">Nem</div>
</div>
<div class="a" style="left:662px;top:130px;width:17px;height:503px;background:#f8f8f8;border-right:1px solid #fdfdfd"></div>
<div class="a" style="left:662px;top:130px;width:17px;height:17px;background:#f0f0f0;border:1px solid;border-color:#e6e6e6 #6c6c6c #6c6c6c #e6e6e6;box-shadow:inset -1px -1px 0 #a0a0a0, inset 1px 1px 0 #fff"></div>
<div class="a" style="left:662px;top:223px;width:17px;height:185px;background:#f0f0f0;border:1px solid;border-color:#e6e6e6 #6c6c6c #6c6c6c #e6e6e6;box-shadow:inset -1px -1px 0 #a0a0a0, inset 1px 1px 0 #fff"></div>
<div class="a" style="left:662px;top:616px;width:17px;height:17px;background:#f0f0f0;border:1px solid;border-color:#e6e6e6 #6c6c6c #6c6c6c #e6e6e6;box-shadow:inset -1px -1px 0 #a0a0a0, inset 1px 1px 0 #fff"></div>
<svg class="a" style="left:662px;top:130px" width="17" height="17" viewBox="662 130 17 17"><path d="M666.7 139.9H674.3L670.5 135.7z" fill="#000"/></svg>
<svg class="a" style="left:662px;top:616px" width="17" height="17" viewBox="662 616 17 17"><path d="M666.5 623.1H674.1L670.3 627.1z" fill="#000"/></svg>
<div class="a" style="left:1px;top:633px;width:661px;height:17px;background:#f8f8f8"></div>
<div class="a" style="left:1px;top:633px;width:17px;height:17px;background:#f0f0f0;border:1px solid;border-color:#e6e6e6 #6c6c6c #6c6c6c #e6e6e6;box-shadow:inset -1px -1px 0 #a0a0a0, inset 1px 1px 0 #fff"></div>
<div class="a" style="left:240px;top:633px;width:247px;height:17px;background:#f0f0f0;border:1px solid;border-color:#e6e6e6 #6c6c6c #6c6c6c #e6e6e6;box-shadow:inset -1px -1px 0 #a0a0a0, inset 1px 1px 0 #fff"></div>
<div class="a" style="left:645px;top:633px;width:17px;height:17px;background:#f0f0f0;border:1px solid;border-color:#e6e6e6 #6c6c6c #6c6c6c #e6e6e6;box-shadow:inset -1px -1px 0 #a0a0a0, inset 1px 1px 0 #fff"></div>
<div class="a" style="left:662px;top:633px;width:17px;height:17px;background:#f0f0f0"></div>
<svg class="a" style="left:1px;top:633px" width="17" height="17" viewBox="1 633 17 17"><path d="M10.1 637.1V645.3L6 641.2z" fill="#000"/></svg>
<svg class="a" style="left:645px;top:633px" width="17" height="17" viewBox="645 633 17 17"><path d="M652 637.9V645.3L656.1 641.6z" fill="#000"/></svg>
<div class="a" style="left:1px;top:650px;width:678px;height:2px;background:#fcfcfc"></div>
<div class="a" style="left:1px;top:652px;width:521px;height:23px;background:#f0f0f0;border:1px solid;border-bottom-width:2px;border-color:#a0a0a0 #fff #fff #a0a0a0"></div>
<div class="a" style="left:525px;top:652px;width:99px;height:23px;background:#f0f0f0;border:1px solid;border-bottom-width:2px;border-color:#a0a0a0 #fff #fff #a0a0a0"></div>
<div class="a" style="left:627px;top:652px;width:50px;height:23px;background:#f0f0f0;border:1px solid;border-bottom-width:2px;border-color:#a0a0a0 #fff #fff #a0a0a0"></div>
<div class="a" style="left:529.3px;top:656px;font-size:13.33px;line-height:16px;color:#000">1/332</div>
<div class="a" style="left:631px;top:656px;font-size:13.33px;line-height:16px;color:#000">Felülír</div>
<div class="a" style="left:0;top:0;width:680px;height:1px;background:#8a816e"></div>
<div class="a" style="left:0;top:0;width:1px;height:676px;background:#8a816e"></div>
<div class="a" style="left:679px;top:0;width:1px;height:676px;background:#8a816e"></div>
<div class="a" style="left:0;top:675px;width:680px;height:1px;background:#7e735f"></div>
<div class="a" style="left:1px;top:30px;width:678px;height:1px;background:#736954"></div>
</div></body></html>
